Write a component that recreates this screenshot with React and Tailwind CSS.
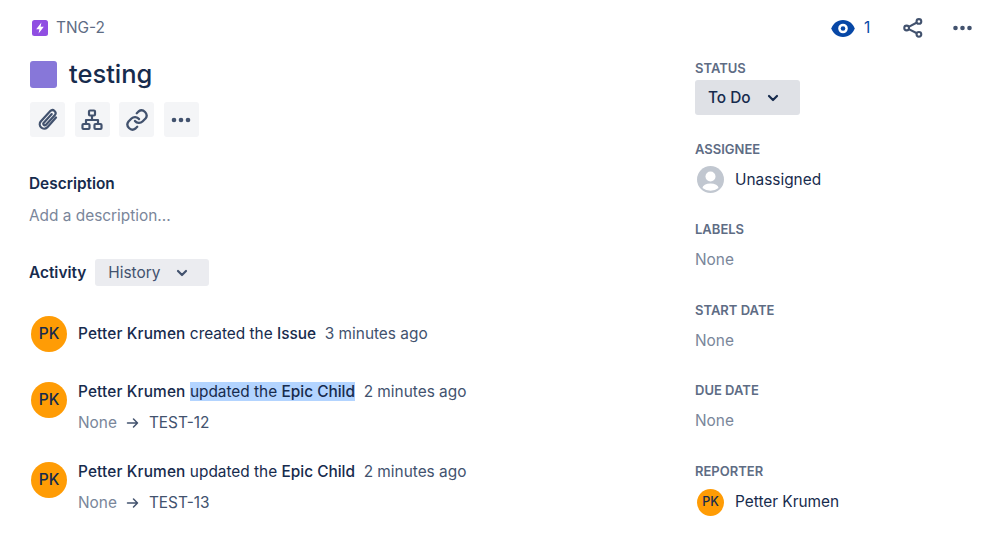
import React from 'react';

const PK = ({ small }) => (
  <div
    className={
      small
        ? 'w-[27px] h-[27px] rounded-full bg-[#ff9c05] flex items-center justify-center text-[12.5px] font-medium text-[#172b4d] shrink-0'
        : 'w-9 h-9 rounded-full bg-[#ff9c05] flex items-center justify-center text-[15.5px] font-medium text-[#172b4d] shrink-0'
    }
  >
    PK
  </div>
);

const Chevron = ({ className }) => (
  <svg width="12" height="8" viewBox="0 0 12 8" className={className} fill="none">
    <path d="M2 2l4 4 4-4" stroke="currentColor" strokeWidth="2.2" strokeLinecap="round" strokeLinejoin="round" />
  </svg>
);

const Dots = ({ w = 20 }) => (
  <svg width={w} height="6" viewBox="0 0 20 6" fill="#42526e">
    <circle cx="3" cy="3" r="2.3" />
    <circle cx="10" cy="3" r="2.3" />
    <circle cx="17" cy="3" r="2.3" />
  </svg>
);

const ToolButton = ({ children }) => (
  <div className="w-[35px] h-[35px] rounded-[3px] bg-[#f4f5f7] flex items-center justify-center">{children}</div>
);

const Field = ({ label, children, className }) => (
  <div className={className}>
    <div className="text-[13px] leading-[20px] font-semibold text-[#5e6c84] uppercase">{label}</div>
    {children}
  </div>
);

const None = () => <div className="text-[15.4px] leading-[24px] text-[#7a869a] mt-[9px]">None</div>;

const Name = () => <span className="font-medium tracking-[0.15px]">Petter Krumen</span>;

const Change = ({ to }) => (
  <div className="flex items-center text-[15.4px] leading-[24px] mt-[7px]">
    <span className="text-[#7a869a]">None</span>
    <svg width="14" height="12" viewBox="0 0 14 12" className="ml-[9px] mr-[9px]" fill="none">
      <path d="M1.5 6h10M7.5 2l4 4-4 4" stroke="#42526e" strokeWidth="1.5" strokeLinecap="round" strokeLinejoin="round" />
    </svg>
    <span className="text-[#42526e]">{to}</span>
  </div>
);

export default function App() {
  return (
    <div className="w-[999px] h-[540px] bg-white flex overflow-hidden text-[#172b4d] font-['Inter',sans-serif]">
      {/* left column */}
      <div className="w-[695px] pl-[29px] shrink-0">
        <div className="flex items-center h-[24px] mt-[16px] pl-[3px]">
          <svg width="16" height="16" viewBox="0 0 16 16">
            <rect width="16" height="16" rx="2.5" fill="#904ee2" />
            <path d="M9.4 2.6L4.2 9.2H7.4L6.6 13.4l5.2-6.6H8.6L9.4 2.6z" fill="#fff" />
          </svg>
          <span className="ml-[8px] text-[15.4px] text-[#5e6c84]">TNG-2</span>
        </div>

        <div className="flex items-center mt-[20px] h-[28px]">
          <div className="w-[27px] h-[27px] ml-px rounded-[3px] bg-[#8777d9]" />
          <h1 className="ml-[12px] text-[25.5px] leading-[32px] font-medium">testing</h1>
        </div>

        <div className="flex gap-[9.5px] mt-[14px] ml-px">
          <ToolButton>
            <svg width="24" height="24" viewBox="0 0 24 24" fill="none" stroke="#42526e" strokeWidth="2.2" strokeLinecap="round" strokeLinejoin="round">
              <path d="M20 9.5l-8.8 9.9a4.4 4.4 0 0 1-6.5-5.9l9.6-10.4a3 3 0 0 1 4.4 4.1l-8.9 9.7a1.5 1.5 0 0 1-2.2-2l8.1-8.8" />
            </svg>
          </ToolButton>
          <ToolButton>
            <svg width="22" height="22" viewBox="0 0 22 22" fill="none" stroke="#42526e" strokeWidth="2.2" strokeLinejoin="round">
              <rect x="8" y="1.5" width="6" height="5" rx="1" />
              <rect x="1.5" y="15" width="7" height="5" rx="1" />
              <rect x="13.5" y="15" width="7" height="5" rx="1" />
              <path d="M11 6.5v4.5M5 15v-4h12v4" />
            </svg>
          </ToolButton>
          <ToolButton>
            <svg width="24" height="24" viewBox="0 0 24 24" fill="none" stroke="#42526e" strokeWidth="2.3" strokeLinecap="round" strokeLinejoin="round">
              <path d="M10 13a5 5 0 0 0 7.5.5l3-3a5 5 0 0 0-7-7l-1.7 1.7" />
              <path d="M14 11a5 5 0 0 0-7.5-.5l-3 3a5 5 0 0 0 7 7l1.7-1.7" />
            </svg>
          </ToolButton>
          <ToolButton>
            <Dots />
          </ToolButton>
        </div>

        <div className="text-[15.4px] leading-[24px] font-semibold mt-[35px]">Description</div>
        <div className="text-[15.4px] leading-[24px] text-[#7a869a] mt-[8px]">Add a description...</div>

        <div className="flex items-center mt-[31px]">
          <span className="text-[15.4px] leading-[24px] font-semibold">Activity</span>
          <div className="ml-[9px] w-[114px] h-[27px] rounded-[3px] bg-[#ebecf0] flex items-center pl-[13px] text-[15.4px] text-[#42526e]">
            History
            <Chevron className="ml-[16px] text-[#42526e]" />
          </div>
        </div>

        <div className="flex items-center mt-[30px] pl-[2px]">
          <PK />
          <div className="ml-[11px] text-[15.4px] leading-[24px] whitespace-pre">
            <Name /> created the <span className="font-medium">Issue</span>
            <span className="text-[#42526e]">{'  3 minutes ago'}</span>
          </div>
        </div>

        <div className="flex mt-[30px] pl-[2px]">
          <PK />
          <div className="ml-[11px]">
            <div className="text-[15.4px] leading-[24px] whitespace-pre mt-[-2px]">
              <Name />{' '}
              <span className="bg-[#b3d4ff]">updated the <span className="font-medium">Epic Child</span></span>
              <span className="text-[#42526e]">{'  2 minutes ago'}</span>
            </div>
            <Change to="TEST-12" />
          </div>
        </div>

        <div className="flex mt-[27px] pl-[2px]">
          <PK />
          <div className="ml-[11px]">
            <div className="text-[15.4px] leading-[24px] whitespace-pre mt-[-2px]">
              <Name /> updated the <span className="font-medium">Epic Child</span>
              <span className="text-[#42526e]">{'  2 minutes ago'}</span>
            </div>
            <Change to="TEST-13" />
          </div>
        </div>
      </div>

      {/* right column */}
      <div className="flex-1">
        <div className="flex items-center h-[24px] mt-[16px] ml-[136px]">
          <svg width="24" height="19" viewBox="0 0 24 19">
            <path d="M12 1C6 1 2 5 0.3 9.5 2 14 6 18 12 18s10-4 11.7-8.5C22 5 18 1 12 1z" fill="#0747a6" />
            <circle cx="12" cy="9.5" r="4.8" fill="#fff" />
            <circle cx="12" cy="9.5" r="2.3" fill="#0747a6" />
          </svg>
          <span className="ml-[9px] text-[15.4px] text-[#0747a6]">1</span>
          <svg width="20" height="20" viewBox="0 0 22 22" className="ml-[33px]" fill="none" stroke="#42526e" strokeWidth="2.3">
            <circle cx="4" cy="11" r="2.6" />
            <circle cx="17.5" cy="3.8" r="2.6" />
            <circle cx="17.5" cy="18" r="2.6" />
            <path d="M6.3 9.7l9-4.7M6.3 12.3l9 4.5" />
          </svg>
          <div className="ml-[29px]">
            <Dots w={21} />
          </div>
        </div>

        <Field label="Status" className="mt-[17.5px]">
          <div className="mt-[2.5px] w-[105px] h-[35px] rounded-[3px] bg-[#dfe1e6] flex items-center pl-[13px] text-[15.4px] font-medium">
            To Do
            <Chevron className="ml-[16px]" />
          </div>
        </Field>

        <Field label="Assignee" className="mt-[23.5px]">
          <div className="flex items-center mt-[7.5px] ml-[2px]">
            <svg width="27" height="27" viewBox="0 0 27 27">
              <circle cx="13.5" cy="13.5" r="13.5" fill="#c1c7d0" />
              <circle cx="13.5" cy="10.5" r="5" fill="#fff" />
              <path d="M5.5 22a8 4.5 0 0 1 8-4.5h0a8 4.5 0 0 1 8 4.5 13 13 0 0 1-16 0z" fill="#fff" />
            </svg>
            <span className="ml-[11px] text-[15.4px] leading-[24px]">Unassigned</span>
          </div>
        </Field>

        <Field label="Labels" className="mt-[26px]"><None /></Field>
        <Field label="Start date" className="mt-[27.5px]"><None /></Field>
        <Field label="Due date" className="mt-[27.5px]"><None /></Field>

        <Field label="Reporter" className="mt-[27.5px]">
          <div className="flex items-center mt-[8px] ml-[2px]">
            <PK small />
            <span className="ml-[11px] text-[15.4px] leading-[24px]">Petter Krumen</span>
          </div>
        </Field>
      </div>
    </div>
  );
}
